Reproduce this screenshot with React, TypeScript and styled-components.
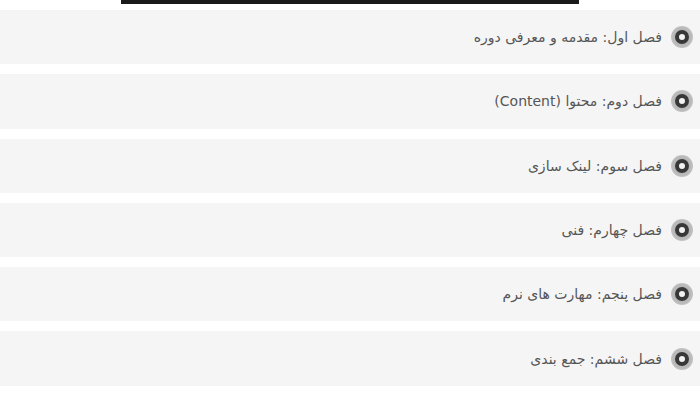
import * as React from "react"
import styled, { createGlobalStyle } from "styled-components"

const GlobalStyle = createGlobalStyle`
  body {
    margin: 0;
    background: #fff;
    font-family: "DejaVu Sans", "Noto Sans", sans-serif;
  }
`

const Page = styled.div`
  width: 700px;
  height: 400px;
  overflow: hidden;
`

const VideoEdge = styled.div`
  width: 458px;
  height: 4px;
  margin-left: 121px;
  background: #1a1a1a;
`

const Chapters = styled.ul`
  list-style: none;
  margin: 6px 0 0;
  padding: 0;
  display: flex;
  flex-direction: column;
  gap: 10px;
  direction: rtl;
`

const Chapter = styled.li`
  height: 54.3px;
  background: #f5f5f5;
  display: flex;
  align-items: center;
  gap: 9px;
  padding-right: 7px;
`

const Bullet = styled.span`
  width: 22px;
  height: 22px;
  border-radius: 50%;
  background: radial-gradient(circle, #b8b8b8 55%, #d6d6d6 100%);
  display: flex;
  align-items: center;
  justify-content: center;
  flex-shrink: 0;

  &::after {
    content: "";
    width: 6px;
    height: 6px;
    border-radius: 50%;
    border: 4px solid #383838;
    background: #f2f2f2;
  }
`

const Title = styled.span`
  font-size: 14px;
  color: #555;
`

const chapters = [
  "فصل اول: مقدمه و معرفی دوره",
  "فصل دوم: محتوا (Content)",
  "فصل سوم: لینک سازی",
  "فصل چهارم: فنی",
  "فصل پنجم: مهارت های نرم",
  "فصل ششم: جمع بندی",
]

export default function App() {
  return (
    <Page>
      <GlobalStyle />
      <VideoEdge />
      <Chapters>
        {chapters.map((c) => (
          <Chapter key={c}>
            <Bullet />
            <Title>{c}</Title>
          </Chapter>
        ))}
      </Chapters>
    </Page>
  )
}
